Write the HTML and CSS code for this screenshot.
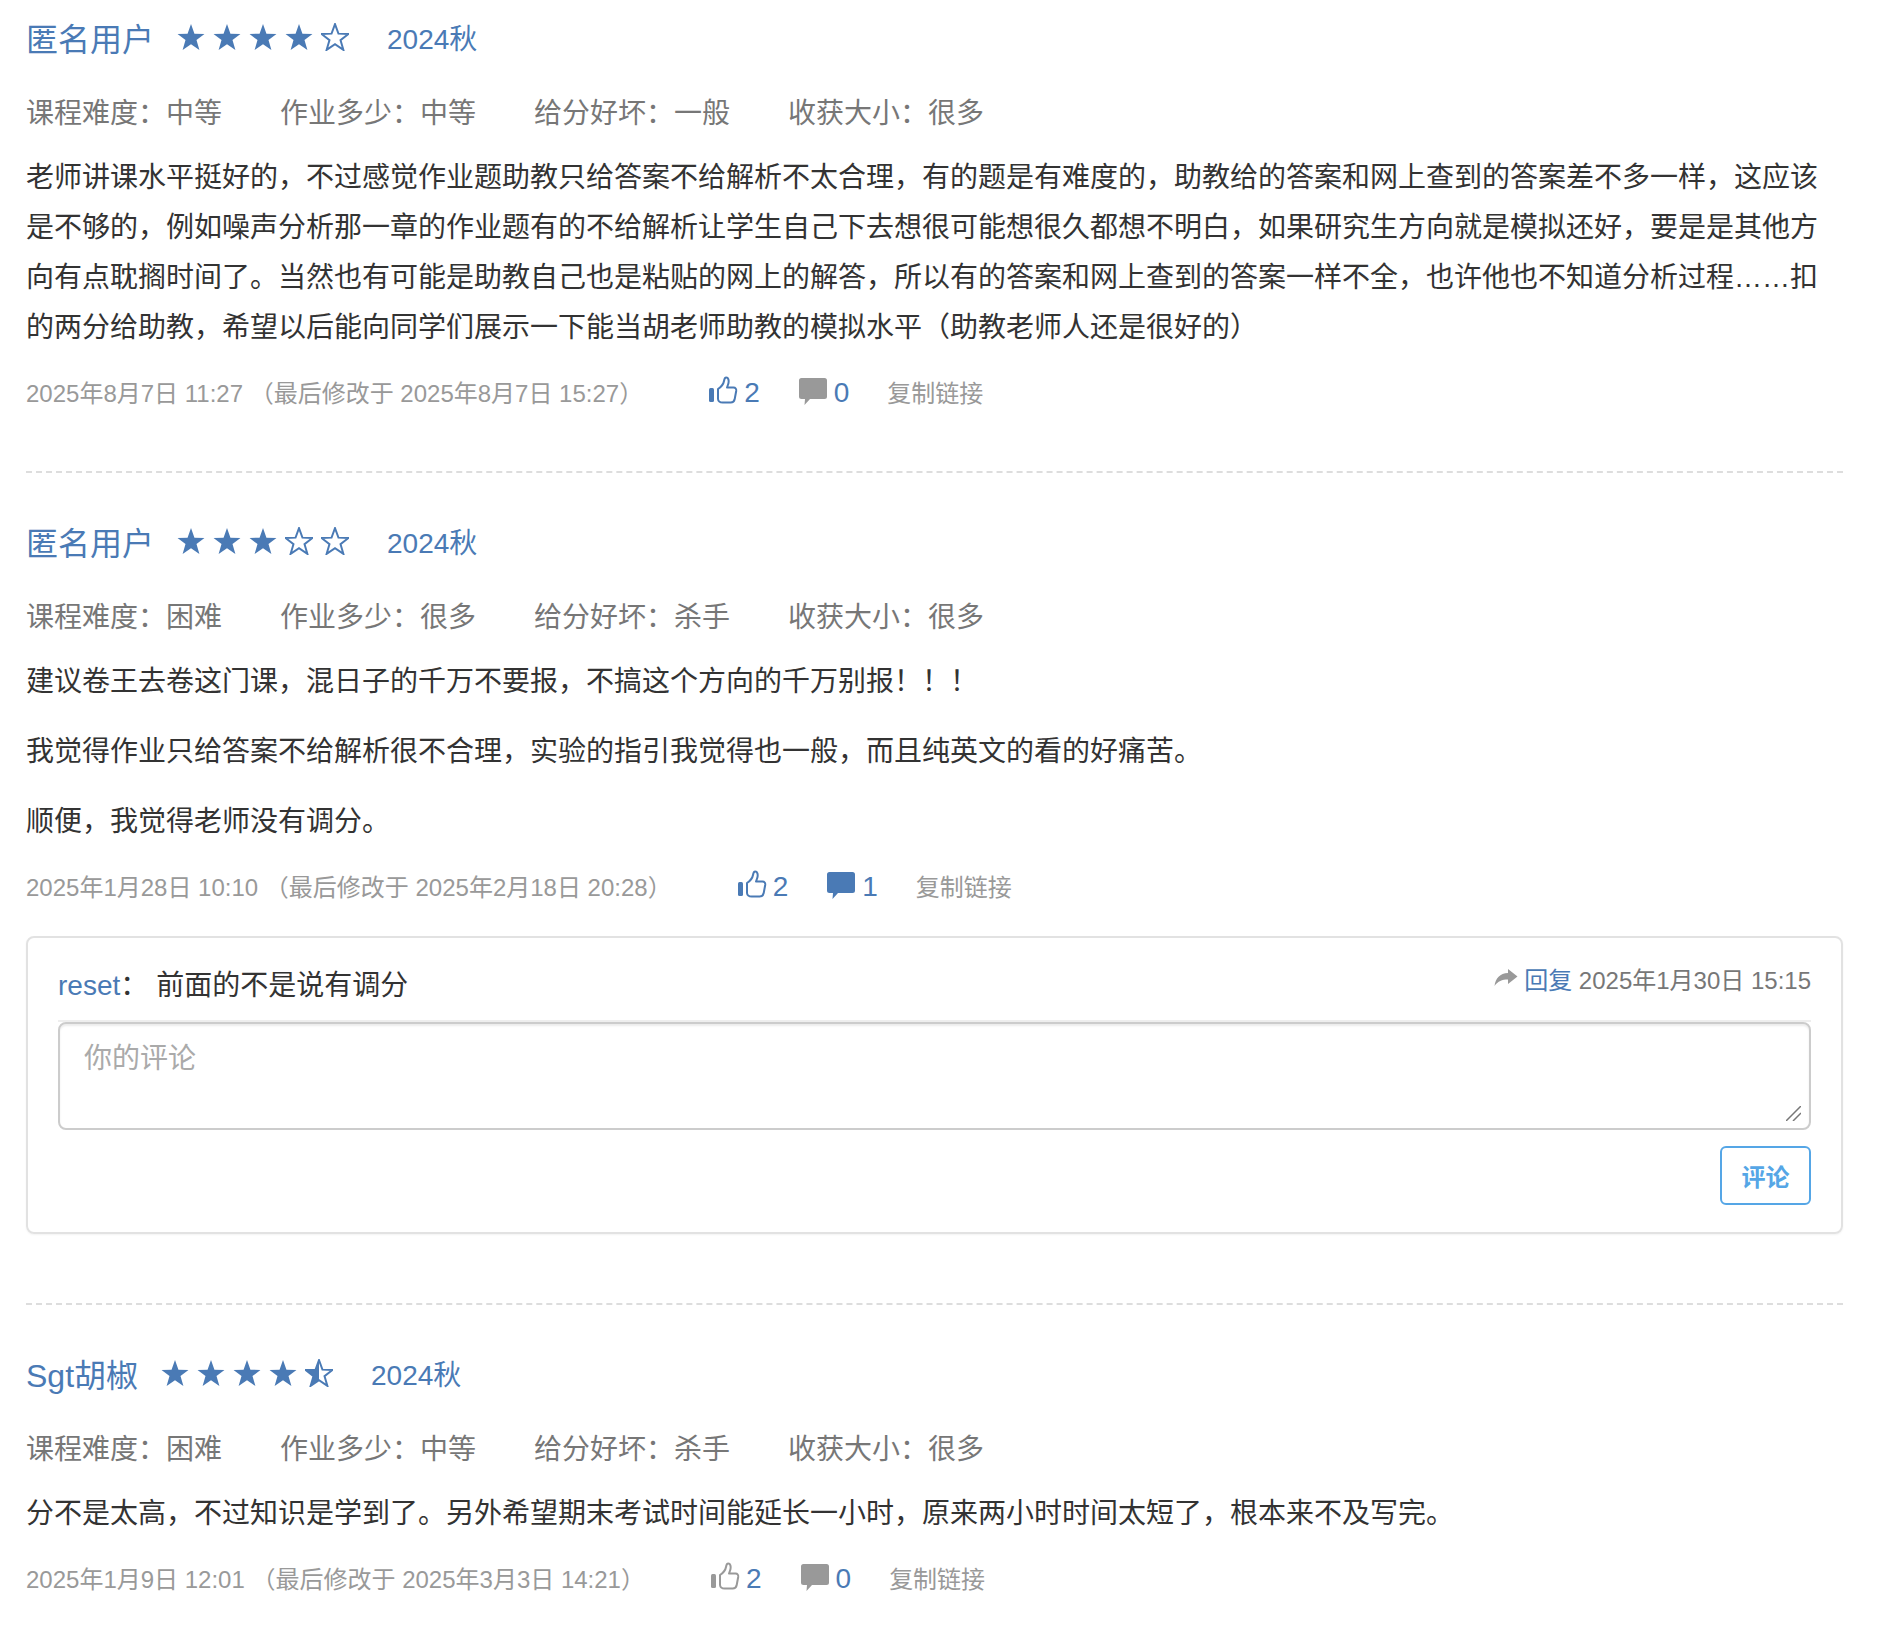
FILE: index.html
```html
<!DOCTYPE html>
<html lang="zh-CN">
<head>
<meta charset="utf-8">
<title>课程点评</title>
<link rel="stylesheet" href="styles.css">
</head>
<body>
<svg class="defs" width="0" height="0" aria-hidden="true">
  <defs>
    <path id="star-shape" d="M14 2l3.200 8.900 9.300.3-7.400 5.700 2.700 9.100L14 20.700l-7.800 5.300 2.700-9.100-7.400-5.700 9.300-.3z"/>
    <clipPath id="half-clip"><rect x="0" y="0" width="14" height="28"/></clipPath>
    <symbol id="star-full" viewBox="1 1 26 26"><use href="#star-shape" fill="currentColor"/></symbol>
    <symbol id="star-empty" viewBox="1 1 26 26"><use href="#star-shape" fill="none" stroke="currentColor" stroke-width="1.8"/></symbol>
    <symbol id="star-half" viewBox="1 1 26 26"><use href="#star-shape" fill="none" stroke="currentColor" stroke-width="1.8"/><use href="#star-shape" fill="currentColor" clip-path="url(#half-clip)"/></symbol>
    <symbol id="thumb" viewBox="0 0 30 30">
      <rect x="1" y="12" width="5" height="14" rx="1.5" fill="currentColor"/>
      <path d="M10 13c3-2 5.500-5 6-8 .3-2 .8-3.500 2.200-3.500 2.300 0 2.800 3 2.300 5.500-.3 1.500-1 3-1.500 4.500h6.500c2 0 3 1.500 2.700 3.500l-1.500 8c-.5 2.500-2 3.500-4 3.500h-8c-2.500 0-4.500-1.500-4.700-3.500z" fill="none" stroke="currentColor" stroke-width="2" stroke-linejoin="round"/>
    </symbol>
    <symbol id="bubble" viewBox="0 0 30 30">
      <path d="M3.500 2h23A2.500 2.500 0 0 1 29 4.500v16a2.500 2.500 0 0 1-2.500 2.500H12l-5.500 6 .5-6H3.500A2.500 2.500 0 0 1 1 20.500v-16A2.500 2.500 0 0 1 3.500 2z" fill="currentColor"/>
    </symbol>
    <symbol id="reply" viewBox="0 0 24 20">
      <path d="M14 1l9.500 7.500L14 16v-4.500C8 11.500 4 13 .5 18 1.500 10 6 5.500 14 5z" fill="currentColor"/>
    </symbol>
  </defs>
</svg>

<main class="reviews">
  <article class="review">
    <header class="review-head">
      <a class="author">匿名用户</a>
      <span class="stars"><svg class="star"><use href="#star-full"/></svg><svg class="star"><use href="#star-full"/></svg><svg class="star"><use href="#star-full"/></svg><svg class="star"><use href="#star-full"/></svg><svg class="star"><use href="#star-empty"/></svg></span>
      <a class="term">2024秋</a>
    </header>
    <ul class="metrics">
      <li>课程难度：中等</li><li>作业多少：中等</li><li>给分好坏：一般</li><li>收获大小：很多</li>
    </ul>
    <div class="body">
      <p>老师讲课水平挺好的，不过感觉作业题助教只给答案不给解析不太合理，有的题是有难度的，助教给的答案和网上查到的答案差不多一样，这应该是不够的，例如噪声分析那一章的作业题有的不给解析让学生自己下去想很可能想很久都想不明白，如果研究生方向就是模拟还好，要是是其他方向有点耽搁时间了。当然也有可能是助教自己也是粘贴的网上的解答，所以有的答案和网上查到的答案一样不全，也许他也不知道分析过程……扣的两分给助教，希望以后能向同学们展示一下能当胡老师助教的模拟水平（助教老师人还是很好的）</p>
    </div>
    <footer class="review-foot">
      <time class="stamp">2025年8月7日 11:27 （最后修改于 2025年8月7日 15:27）</time>
      <a class="stat"><svg class="ico"><use href="#thumb"/></svg><span class="count">2</span></a>
      <a class="stat"><svg class="ico ico-muted"><use href="#bubble"/></svg><span class="count">0</span></a>
      <a class="copy">复制链接</a>
    </footer>
  </article>

  <article class="review">
    <header class="review-head">
      <a class="author">匿名用户</a>
      <span class="stars"><svg class="star"><use href="#star-full"/></svg><svg class="star"><use href="#star-full"/></svg><svg class="star"><use href="#star-full"/></svg><svg class="star"><use href="#star-empty"/></svg><svg class="star"><use href="#star-empty"/></svg></span>
      <a class="term">2024秋</a>
    </header>
    <ul class="metrics">
      <li>课程难度：困难</li><li>作业多少：很多</li><li>给分好坏：杀手</li><li>收获大小：很多</li>
    </ul>
    <div class="body">
      <p>建议卷王去卷这门课，混日子的千万不要报，不搞这个方向的千万别报！！！</p>
      <p>我觉得作业只给答案不给解析很不合理，实验的指引我觉得也一般，而且纯英文的看的好痛苦。</p>
      <p>顺便，我觉得老师没有调分。</p>
    </div>
    <footer class="review-foot">
      <time class="stamp">2025年1月28日 10:10 （最后修改于 2025年2月18日 20:28）</time>
      <a class="stat"><svg class="ico"><use href="#thumb"/></svg><span class="count">2</span></a>
      <a class="stat"><svg class="ico"><use href="#bubble"/></svg><span class="count">1</span></a>
      <a class="copy">复制链接</a>
    </footer>
    <section class="comments">
      <div class="comment">
        <div class="comment-text"><a class="comment-user">reset</a><span class="colon">：</span>前面的不是说有调分</div>
        <div class="comment-meta"><svg class="reply-ico"><use href="#reply"/></svg><a class="reply">回复</a> 2025年1月30日 15:15</div>
      </div>
      <div class="input-wrap">
        <textarea class="comment-input" placeholder="你的评论"></textarea>
        <svg class="grip" viewBox="0 0 15 15" aria-hidden="true"><path d="M0 15L15 0M7 15l8-8"/></svg>
      </div>
      <div class="comment-actions"><button class="comment-btn" type="button">评论</button></div>
    </section>
  </article>

  <article class="review">
    <header class="review-head">
      <a class="author">Sgt胡椒</a>
      <span class="stars"><svg class="star"><use href="#star-full"/></svg><svg class="star"><use href="#star-full"/></svg><svg class="star"><use href="#star-full"/></svg><svg class="star"><use href="#star-full"/></svg><svg class="star"><use href="#star-half"/></svg></span>
      <a class="term">2024秋</a>
    </header>
    <ul class="metrics">
      <li>课程难度：困难</li><li>作业多少：中等</li><li>给分好坏：杀手</li><li>收获大小：很多</li>
    </ul>
    <div class="body">
      <p>分不是太高，不过知识是学到了。另外希望期末考试时间能延长一小时，原来两小时时间太短了，根本来不及写完。</p>
    </div>
    <footer class="review-foot">
      <time class="stamp">2025年1月9日 12:01 （最后修改于 2025年3月3日 14:21）</time>
      <a class="stat"><svg class="ico ico-muted"><use href="#thumb"/></svg><span class="count">2</span></a>
      <a class="stat"><svg class="ico ico-muted"><use href="#bubble"/></svg><span class="count">0</span></a>
      <a class="copy">复制链接</a>
    </footer>
  </article>
</main>
</body>
</html>
```
FILE: styles.css
```css
* { box-sizing: border-box; }
html, body { margin: 0; padding: 0; background: #fff; }
body {
  font-family: "Liberation Sans", "Noto Sans CJK SC", sans-serif;
  color: #333;
  font-size: 28px;
}
.defs { position: absolute; }
.reviews { padding: 0 49px 0 26px; }
.review { padding: 14px 0 60px; }
.review + .review { border-top: 2px dashed #ddd; padding-top: 45px; }
.review-head { display: flex; align-items: center; height: 46px; color: #4a7ab5; }
.author { font-size: 32px; }
.stars { display: flex; gap: 8px; margin-left: 23px; }
.star { width: 28px; height: 28px; color: #4a7ab5; }
.term { font-size: 28px; margin-left: 38px; }
.metrics { list-style: none; display: flex; gap: 58px; margin: 34px 0 0; padding: 0; height: 40px; line-height: 40px; color: #777; }
.body { margin-top: 19px; }
.body p { margin: 0 0 20px; line-height: 50px; }
.review-foot { display: flex; align-items: center; height: 40px; margin-top: -2px; font-size: 24px; color: #999; }
.stamp { margin-right: 65px; }
.stat { display: flex; align-items: center; font-size: 28px; color: #4a7ab5; margin-right: 38px; }
.count { padding-top: 4px; }
.ico { width: 30px; height: 30px; margin-right: 6px; color: #4a7ab5; }
.ico-muted { color: #999; }
.copy { color: #999; }
.comments {
  margin: 31px 0 9px;
  padding: 20px 30px 27px;
  border: 2px solid #e2e2e2;
  border-radius: 8px;
  box-shadow: 0 1px 2px rgba(0,0,0,.05);
}
.comment { display: flex; justify-content: space-between; align-items: flex-start; height: 64px; border-bottom: 2px solid #eee; }
.comment-text { line-height: 56px; color: #333; }
.comment-user { font-size: 28px; color: #4a7ab5; }
.colon { margin-right: 8px; }
.comment-meta { display: flex; align-items: center; height: 40px; font-size: 24px; color: #777; white-space: pre; }
.reply-ico { width: 24px; height: 20px; margin-right: 6px; color: #999; }
.reply { color: #4a7ab5; }
.input-wrap { position: relative; }
.comment-input {
  display: block;
  width: 100%;
  height: 108px;
  padding: 12px 24px;
  border: 2px solid #ccc;
  border-radius: 8px;
  box-shadow: inset 0 2px 2px rgba(0,0,0,.075);
  font: inherit;
  color: #333;
  resize: none;
  outline: none;
}
.comment-input::placeholder { color: #aaa; opacity: 1; }
.grip { position: absolute; right: 10px; bottom: 9px; width: 15px; height: 15px; pointer-events: none; fill: none; stroke: #777; stroke-width: 1.5; }
.comment-actions { display: flex; justify-content: flex-end; margin-top: 16px; }
.comment-btn {
  width: 91px;
  height: 59px;
  padding: 0;
  border: 2px solid #55a6e6;
  border-radius: 6px;
  background: #fff;
  color: #55a6e6;
  font: 700 24px "Liberation Sans", "Noto Sans CJK SC", sans-serif;
}
```
